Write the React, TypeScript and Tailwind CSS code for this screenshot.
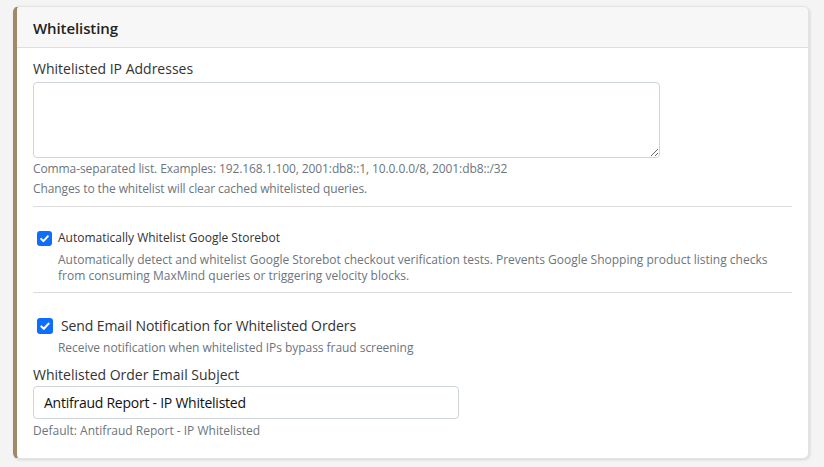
import React from "react";

function Check({ size }: { size: number }) {
  return (
    <span
      className="inline-flex items-center justify-center rounded-[3px] bg-[#0d6efd] shrink-0"
      style={{ width: size, height: size }}
    >
      <svg viewBox="0 0 20 20" width={size} height={size} fill="none">
        <path d="M5.5 10.5l3 3 6-6.5" stroke="#fff" strokeWidth="2.6" strokeLinecap="round" strokeLinejoin="round" />
      </svg>
    </span>
  );
}

export default function App() {
  return (
    <div className="w-[824px] h-[467px] bg-[#f4f4f4] pt-[6px] pl-[13px] pr-[15px] font-['Open_Sans','Noto_Sans',sans-serif]">
      <div className="bg-white rounded-[6px] border border-[#e3e3e3] border-l-[4px] border-l-[#9f8966] shadow-[1px_1px_3px_rgba(0,0,0,0.12)] overflow-hidden">
        <div className="h-[41px] bg-[#f7f7f7] border-b border-[#dedede] flex items-center pl-[16px] pt-[2px]">
          <h2 className="text-[15px] font-semibold text-[#222] tracking-[-0.1px]">Whitelisting</h2>
        </div>
        <div className="pl-[16px] pr-[16px] pt-[11px] pb-[17px]">
          <label className="block text-[14px] leading-[20px] text-[#333]">Whitelisted IP Addresses</label>
          <textarea className="mt-[3px] block w-[627px] h-[76px] border border-[#ced4da] rounded-[4px] resize-y" />
          <div className="mt-[1px] text-[12px] leading-[20px] text-[#6c757d] tracking-[-0.1px]">
            Comma-separated list. Examples: 192.168.1.100, 2001:db8::1, 10.0.0.0/8, 2001:db8::/32
            <br />
            Changes to the whitelist will clear cached whitelisted queries.
          </div>
          <div className="mt-[7px] border-t border-[#dcdcdc]" />
          <div className="pt-[23px] pl-[4px]">
            <div className="flex items-center gap-[6px]">
              <Check size={15} />
              <span className="text-[12px] leading-[16px] text-[#333]">Automatically Whitelist Google Storebot</span>
            </div>
            <div className="mt-[6px] pl-[21px] text-[12px] leading-[16px] text-[#6c757d]">
              Automatically detect and whitelist Google Storebot checkout verification tests. Prevents Google Shopping product listing checks
              <br />
              from consuming MaxMind queries or triggering velocity blocks.
            </div>
          </div>
          <div className="mt-[8px] border-t border-[#dcdcdc]" />
          <div className="pt-[24px] pl-[4px]">
            <div className="flex items-center gap-[8px]">
              <Check size={16} />
              <span className="text-[14px] leading-[18px] text-[#333] tracking-[-0.1px]">Send Email Notification for Whitelisted Orders</span>
            </div>
            <div className="mt-[5px] pl-[21px] text-[12px] leading-[16px] text-[#6c757d] tracking-[-0.05px]">
              Receive notification when whitelisted IPs bypass fraud screening
            </div>
          </div>
          <label className="mt-[9px] block text-[14px] leading-[20px] text-[#333]">Whitelisted Order Email Subject</label>
          <div className="mt-[1px] w-[426px] h-[33px] border border-[#ced4da] rounded-[4px] flex items-center pl-[10px]">
            <span className="text-[14px] text-[#111] tracking-[-0.25px]">Antifraud Report - IP Whitelisted</span>
          </div>
          <div className="mt-[2px] text-[12px] leading-[20px] text-[#6c757d]">Default: Antifraud Report - IP Whitelisted</div>
        </div>
      </div>
    </div>
  );
}
